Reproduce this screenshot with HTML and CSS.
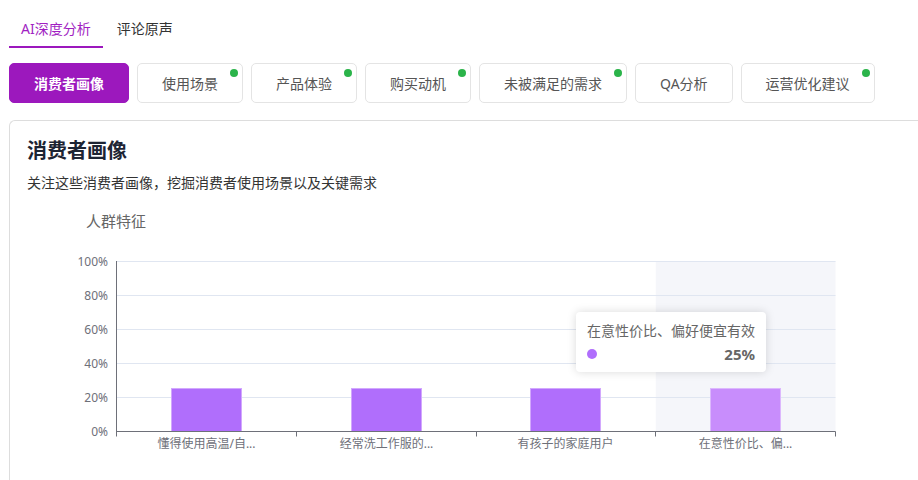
FILE: index.html
```html
<!DOCTYPE html>
<html lang="zh-CN">
<head>
    <meta charset="UTF-8">
    <title>AI深度分析</title>
    <link rel="stylesheet" href="styles.css">
</head>
<body>
    <div class="page">
        <!-- Top tabs -->
        <div class="tabs">
            <div class="tab active">AI深度分析</div>
            <div class="tab">评论原声</div>
        </div>

        <!-- Analysis categories -->
        <div class="chips">
            <button class="chip active">消费者画像</button>
            <button class="chip">使用场景<span class="dot"></span></button>
            <button class="chip">产品体验<span class="dot"></span></button>
            <button class="chip">购买动机<span class="dot"></span></button>
            <button class="chip">未被满足的需求<span class="dot"></span></button>
            <button class="chip">QA分析</button>
            <button class="chip">运营优化建议<span class="dot"></span></button>
        </div>

        <!-- Consumer profile card -->
        <section class="card">
            <h2 class="card-title">消费者画像</h2>
            <p class="card-desc">关注这些消费者画像，挖掘消费者使用场景以及关键需求</p>

            <div class="chart">
                <svg class="chart-svg" width="880" height="270" viewBox="0 0 880 270">
                    <text class="chart-title" x="59" y="27">人群特征</text>

                    <!-- hovered category band -->
                    <rect x="628.75" y="61" width="179.75" height="170.5" fill="#f5f6fa"/>

                    <!-- grid -->
                    <g stroke="#e0e6f1" stroke-width="1">
                        <line x1="89.5" y1="61.5" x2="808.5" y2="61.5"/>
                        <line x1="89.5" y1="95.5" x2="808.5" y2="95.5"/>
                        <line x1="89.5" y1="129.5" x2="808.5" y2="129.5"/>
                        <line x1="89.5" y1="163.5" x2="808.5" y2="163.5"/>
                        <line x1="89.5" y1="197.5" x2="808.5" y2="197.5"/>
                    </g>

                    <!-- y labels -->
                    <g class="axis-label" text-anchor="end">
                        <text x="81" y="65.5">100%</text>
                        <text x="81" y="99.5">80%</text>
                        <text x="81" y="133.5">60%</text>
                        <text x="81" y="167.5">40%</text>
                        <text x="81" y="201.5">20%</text>
                        <text x="81" y="235.5">0%</text>
                    </g>

                    <!-- bars -->
                    <g stroke-width="1">
                        <rect x="144.5" y="188.5" width="70" height="43" fill="#b06efc" stroke="#d2a8fd"/>
                        <rect x="324.5" y="188.5" width="70" height="43" fill="#b06efc" stroke="#d2a8fd"/>
                        <rect x="503.5" y="188.5" width="70" height="43" fill="#b06efc" stroke="#d2a8fd"/>
                        <rect x="683.5" y="188.5" width="70" height="43" fill="#c88dfc" stroke="#dcb8fd"/>
                    </g>

                    <!-- axes -->
                    <g stroke="#6e7079" stroke-width="1">
                        <line x1="89.5" y1="61" x2="89.5" y2="232"/>
                        <line x1="89.5" y1="231.5" x2="808.5" y2="231.5"/>
                        <line x1="89.5" y1="231.5" x2="89.5" y2="236.5"/>
                        <line x1="269.5" y1="231.5" x2="269.5" y2="236.5"/>
                        <line x1="449.5" y1="231.5" x2="449.5" y2="236.5"/>
                        <line x1="628.5" y1="231.5" x2="628.5" y2="236.5"/>
                        <line x1="808.5" y1="231.5" x2="808.5" y2="236.5"/>
                    </g>

                    <!-- x labels -->
                    <g class="axis-label" text-anchor="middle">
                        <text x="179.5" y="247.5">懂得使用高温/自...</text>
                        <text x="359.5" y="247.5">经常洗工作服的...</text>
                        <text x="538.5" y="247.5">有孩子的家庭用户</text>
                        <text x="718.5" y="247.5">在意性价比、偏...</text>
                    </g>
                </svg>

                <div class="tooltip">
                    <div class="tooltip-name">在意性价比、偏好便宜有效</div>
                    <div class="tooltip-row">
                        <span class="tooltip-dot"></span>
                        <span class="tooltip-value">25%</span>
                    </div>
                </div>
            </div>
        </section>
    </div>
</body>
</html>
```

FILE: styles.css
```css
/* Base */
body {
    margin: 0;
    padding: 0;
    background: #fff;
    font-family: "Noto Sans", "Noto Sans CJK SC", sans-serif;
    color: #333;
    overflow: hidden;
}

.page {
    padding-left: 9px;
}

/* Tabs */
.tabs {
    display: flex;
    gap: 2px;
}

.tab {
    padding: 19px 12px 7px;
    font-size: 14px;
    line-height: 20px;
    color: #333;
    border-bottom: 2px solid transparent;
}

.tab.active {
    color: #a11fc2;
    border-bottom-color: #9c18bd;
}

/* Category chips */
.chips {
    display: flex;
    gap: 8px;
    margin-top: 15px;
}

.chip {
    position: relative;
    height: 40px;
    padding: 0 24px;
    border: 1px solid #e4e4e4;
    border-radius: 5px;
    background: #fff;
    font-family: inherit;
    font-size: 14px;
    color: #555;
    white-space: nowrap;
}

.chip.active {
    background: #9c18bd;
    border-color: #9c18bd;
    color: #fff;
    font-weight: 700;
}

.chip .dot {
    position: absolute;
    top: 5px;
    right: 4px;
    width: 8px;
    height: 8px;
    border-radius: 50%;
    background: #2bb44a;
}

/* Card (runs on past the right and bottom of the view) */
.card {
    box-sizing: border-box;
    width: 909px;
    height: 360px;
    margin-top: 17px;
    padding: 16px 17px;
    border: 1px solid #ddd;
    border-right: 0;
    border-bottom: 0;
    border-radius: 6px 0 0 0;
    overflow: hidden;
}

.card-title {
    margin: 0;
    font-size: 20px;
    line-height: 28px;
    font-weight: 700;
    color: #1d2433;
}

.card-desc {
    margin: 8px 0 0;
    font-size: 14px;
    line-height: 20px;
    color: #333;
}

/* Chart */
.chart {
    position: relative;
    margin-top: 7px;
    height: 270px;
}

.chart-svg {
    display: block;
}

.chart-title {
    font-size: 15px;
    fill: #666;
}

.axis-label {
    font-size: 12px;
    fill: #6e7079;
}

/* Tooltip */
.tooltip {
    position: absolute;
    left: 549px;
    top: 112px;
    width: 190px;
    height: 60px;
    box-sizing: border-box;
    padding: 10px 11px;
    background: #fff;
    border-radius: 4px;
    box-shadow: 0 0 10px rgba(0, 0, 0, 0.15);
}

.tooltip-name {
    font-size: 14px;
    line-height: 18px;
    color: #666;
    white-space: nowrap;
}

.tooltip-row {
    display: flex;
    align-items: center;
    justify-content: space-between;
    margin-top: 5px;
    height: 18px;
}

.tooltip-dot {
    width: 10px;
    height: 10px;
    border-radius: 50%;
    background: #b06efc;
}

.tooltip-value {
    font-size: 15px;
    font-weight: 700;
    color: #666;
}
```
